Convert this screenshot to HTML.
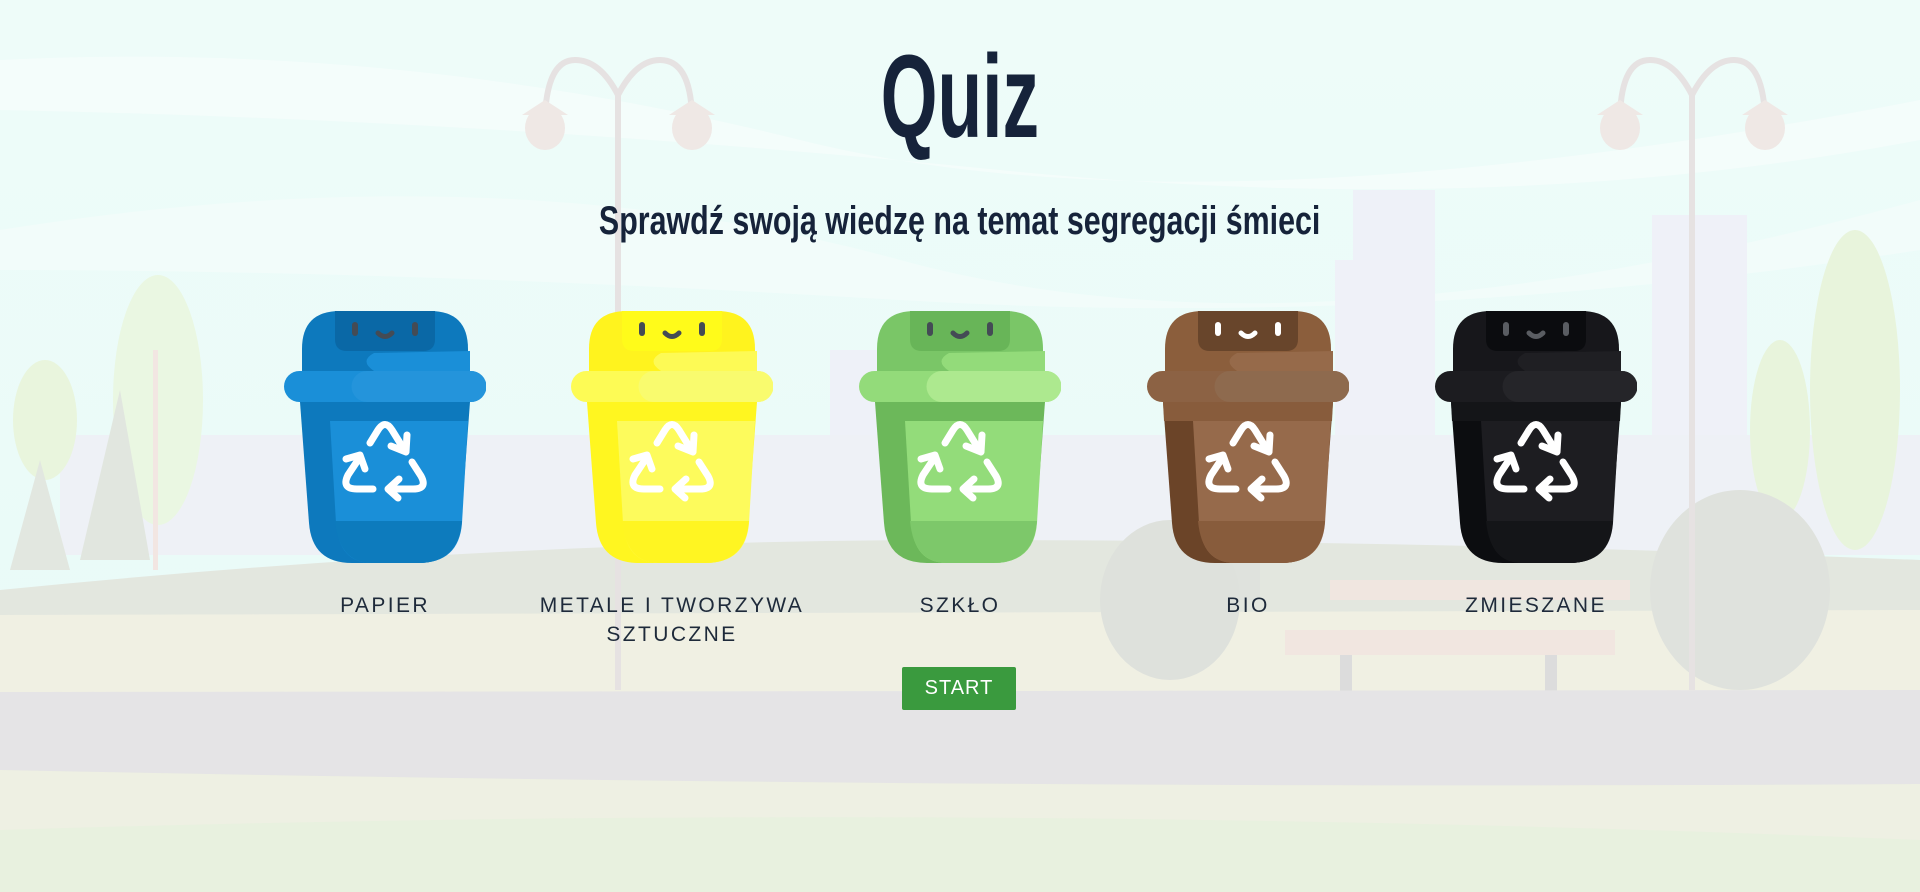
<!DOCTYPE html>
<html><head><meta charset="utf-8">
<style>
html,body{margin:0;padding:0;width:1920px;height:892px;overflow:hidden;}
body{position:relative;background:#eafbf8;font-family:"Liberation Sans",sans-serif;}
#bg{position:absolute;left:0;top:0;}
h1{position:absolute;left:0;width:1920px;top:22px;margin:0;text-align:center;font-size:118px;font-weight:bold;color:#16233a;line-height:150px;}
h1 span{display:inline-block;transform:scaleX(0.62);}
h2{position:absolute;left:0;width:1920px;top:196px;margin:0;text-align:center;font-size:40px;font-weight:bold;color:#16233a;line-height:50px;white-space:nowrap;}
h2 span{display:inline-block;transform:scaleX(0.76);}
.bin{position:absolute;top:311px;width:202px;height:252px;}
.lbl{position:absolute;top:591px;width:300px;text-align:center;font-size:21px;letter-spacing:2.4px;color:#1e2a3a;line-height:29px;}
.btn{position:absolute;left:902px;top:667px;width:114px;height:43px;background:#3a9a3e;color:#fff;font-size:20px;letter-spacing:1px;text-align:center;line-height:43px;border-radius:2px;}
</style></head><body>
<svg id="bg" width="1920" height="892" viewBox="0 0 1920 892">
<defs><linearGradient id="sky" x1="0" y1="0" x2="0" y2="1"><stop offset="0" stop-color="#eefcf9"/><stop offset="1" stop-color="#e8faf8"/></linearGradient></defs>
<rect width="1920" height="892" fill="url(#sky)"/>
<path d="M0 60 Q400 40 800 140 T1920 100 L1920 140 Q1500 220 1000 170 T0 110Z" fill="#f4fdfb"/>
<path d="M0 230 Q500 150 900 260 T1920 200 L1920 250 Q1400 330 900 300 T0 270Z" fill="#f2fcfa"/>
<rect x="1353" y="190" width="82" height="350" fill="#eef1f8"/>
<rect x="1335" y="260" width="100" height="280" fill="#eff1f8"/>
<rect x="1652" y="215" width="95" height="330" fill="#eff1f8"/>
<rect x="830" y="350" width="120" height="200" fill="#eef1f8"/>
<rect x="60" y="435" width="1860" height="120" fill="#eef1f6"/>
<ellipse cx="158" cy="400" rx="45" ry="125" fill="#eaf7e2"/>
<ellipse cx="45" cy="420" rx="32" ry="60" fill="#e9f5dd"/>
<ellipse cx="1855" cy="390" rx="45" ry="160" fill="#e8f4dc"/>
<ellipse cx="1780" cy="430" rx="30" ry="90" fill="#e8f4dc"/>
<path d="M80 560 L120 390 L150 560Z" fill="#e1e6df"/>
<path d="M10 570 L40 460 L70 570Z" fill="#e2e7e0"/>
<rect x="153" y="350" width="5" height="220" fill="#f2e6e2"/>
<path d="M0 590 Q500 540 960 540 T1920 560 L1920 892 L0 892Z" fill="#e3e7df"/>
<path d="M0 615 L1920 610 L1920 700 L0 700Z" fill="#f0f0e3"/>
<path d="M1180 520 Q1210 500 1260 520 L1260 600 L1160 600Z" fill="#dfe2dd"/>
<ellipse cx="1170" cy="600" rx="70" ry="80" fill="#dee1dc"/>
<ellipse cx="1740" cy="590" rx="90" ry="100" fill="#dfe2dd"/>
<rect x="1285" y="630" width="330" height="25" fill="#f1e6e0"/>
<rect x="1330" y="580" width="300" height="20" fill="#f0e6e0"/>
<rect x="1340" y="655" width="12" height="45" fill="#dcdcdc"/>
<rect x="1545" y="655" width="12" height="45" fill="#dcdcdc"/>
<path d="M0 692 L1920 690 L1920 784 Q960 790 0 770Z" fill="#e5e4e6"/>
<path d="M0 770 Q960 790 1920 784 L1920 892 L0 892Z" fill="#eef0e3"/>
<path d="M0 830 Q960 800 1920 840 L1920 892 L0 892Z" fill="#e8f1df"/>
<g fill="none" stroke="#e6e2e2" stroke-width="6">
<line x1="618" y1="90" x2="618" y2="690"/>
<path d="M618 95 Q600 60 575 60 Q548 60 545 115"/><path d="M618 95 Q636 60 660 60 Q690 60 692 115"/>
<line x1="1692" y1="90" x2="1692" y2="690"/>
<path d="M1692 95 Q1674 60 1650 60 Q1622 60 1620 115"/><path d="M1692 95 Q1710 60 1734 60 Q1762 60 1765 115"/>
</g>
<g fill="#efe8e5">
<path d="M522 115 L545 100 L568 115Z"/><ellipse cx="545" cy="128" rx="20" ry="22"/>
<path d="M669 115 L692 100 L715 115Z"/><ellipse cx="692" cy="128" rx="20" ry="22"/>
<path d="M1597 115 L1620 100 L1643 115Z"/><ellipse cx="1620" cy="128" rx="20" ry="22"/>
<path d="M1742 115 L1765 100 L1788 115Z"/><ellipse cx="1765" cy="128" rx="20" ry="22"/>
</g>
</svg>

<h1><span>Quiz</span></h1>
<h2><span>Sprawdź swoją wiedzę na temat segregacji śmieci</span></h2>

<svg width="0" height="0" style="position:absolute">
<defs>
<g id="rec" fill="none" stroke="#fff" stroke-width="7" stroke-linecap="round" stroke-linejoin="round">
<path d="M-15 -18 L-7 -31 Q0 -42 7 -31 L20 -10"/><path d="M6 -15 L21 -9 L22 -26"/>
<path d="M-12 28 L-28 28 Q-44 28 -37 14 L-25 -4"/><path d="M-39 -2 L-25 -6 L-20 8"/>
<path d="M27 1 L36 15 Q43 28 28 28 L5 28"/><path d="M14 18 L3 28 L13 37"/>
</g>
</defs>
</svg>

<svg class="bin" style="left:284px" viewBox="0 0 202 252">
<path d="M18 60 L18 38 Q18 0 56 0 L146 0 Q184 0 184 38 L184 60Z" fill="#0d79bd"/>
<path d="M90 42 Q75 50 90 60 L186 60 L186 40Z" fill="#1a8fd8"/>
<path d="M51 0 L151 0 L151 28 Q151 40 139 40 L63 40 Q51 40 51 28Z" fill="#0a68a6"/>
<rect x="68" y="11" width="6" height="14" rx="3" fill="#444b55"/><rect x="128" y="11" width="6" height="14" rx="3" fill="#444b55"/>
<path d="M94 22 Q101 29 108 22" stroke="#444b55" stroke-width="5" fill="none" stroke-linecap="round"/>
<path d="M16 91 L186 91 L177 212 Q174 252 134 252 L68 252 Q28 252 25 212Z" fill="#0d79bd"/>
<path d="M46 110 L184 110 L178 212 Q175 252 134 252 L88 252 Q55 252 52 212Z" fill="#1a8fd8"/>
<path d="M51 210 L178 210 Q175 252 134 252 L88 252 Q55 252 51 210Z" fill="#0d7bbd"/>
<rect x="0" y="60" width="202" height="31" rx="15.5" fill="#1a8fd8"/>
<path d="M83 60 L187 60 A15.5 15.5 0 0 1 187 91 L83 91 A15.5 15.5 0 0 1 83 60Z" fill="#2494db"/>
<use href="#rec" x="101" y="150"/>
</svg>
<svg class="bin" style="left:571px" viewBox="0 0 202 252">
<path d="M18 60 L18 38 Q18 0 56 0 L146 0 Q184 0 184 38 L184 60Z" fill="#fff31e"/>
<path d="M90 42 Q75 50 90 60 L186 60 L186 40Z" fill="#fdfa55"/>
<path d="M51 0 L151 0 L151 28 Q151 40 139 40 L63 40 Q51 40 51 28Z" fill="#fffb1a"/>
<rect x="68" y="11" width="6" height="14" rx="3" fill="#444b55"/><rect x="128" y="11" width="6" height="14" rx="3" fill="#444b55"/>
<path d="M94 22 Q101 29 108 22" stroke="#444b55" stroke-width="5" fill="none" stroke-linecap="round"/>
<path d="M16 91 L186 91 L177 212 Q174 252 134 252 L68 252 Q28 252 25 212Z" fill="#fff620"/>
<path d="M46 110 L184 110 L178 212 Q175 252 134 252 L88 252 Q55 252 52 212Z" fill="#fdfb5c"/>
<path d="M51 210 L178 210 Q175 252 134 252 L88 252 Q55 252 51 210Z" fill="#fff522"/>
<rect x="0" y="60" width="202" height="31" rx="15.5" fill="#fdfb55"/>
<path d="M83 60 L187 60 A15.5 15.5 0 0 1 187 91 L83 91 A15.5 15.5 0 0 1 83 60Z" fill="#f9fb6e"/>
<use href="#rec" x="101" y="150"/>
</svg>
<svg class="bin" style="left:859px" viewBox="0 0 202 252">
<path d="M18 60 L18 38 Q18 0 56 0 L146 0 Q184 0 184 38 L184 60Z" fill="#7ac667"/>
<path d="M90 42 Q75 50 90 60 L186 60 L186 40Z" fill="#93db7a"/>
<path d="M51 0 L151 0 L151 28 Q151 40 139 40 L63 40 Q51 40 51 28Z" fill="#68b558"/>
<rect x="68" y="11" width="6" height="14" rx="3" fill="#444b55"/><rect x="128" y="11" width="6" height="14" rx="3" fill="#444b55"/>
<path d="M94 22 Q101 29 108 22" stroke="#444b55" stroke-width="5" fill="none" stroke-linecap="round"/>
<path d="M16 91 L186 91 L177 212 Q174 252 134 252 L68 252 Q28 252 25 212Z" fill="#6cb85a"/>
<path d="M46 110 L184 110 L178 212 Q175 252 134 252 L88 252 Q55 252 52 212Z" fill="#93dc7a"/>
<path d="M51 210 L178 210 Q175 252 134 252 L88 252 Q55 252 51 210Z" fill="#7dc86a"/>
<rect x="0" y="60" width="202" height="31" rx="15.5" fill="#93db7a"/>
<path d="M83 60 L187 60 A15.5 15.5 0 0 1 187 91 L83 91 A15.5 15.5 0 0 1 83 60Z" fill="#ade98f"/>
<use href="#rec" x="101" y="150"/>
</svg>
<svg class="bin" style="left:1147px" viewBox="0 0 202 252">
<path d="M18 60 L18 38 Q18 0 56 0 L146 0 Q184 0 184 38 L184 60Z" fill="#8b5e3c"/>
<path d="M90 42 Q75 50 90 60 L186 60 L186 40Z" fill="#966a4a"/>
<path d="M51 0 L151 0 L151 28 Q151 40 139 40 L63 40 Q51 40 51 28Z" fill="#68452b"/>
<rect x="68" y="11" width="6" height="14" rx="3" fill="#fff"/><rect x="128" y="11" width="6" height="14" rx="3" fill="#fff"/>
<path d="M94 22 Q101 29 108 22" stroke="#fff" stroke-width="5" fill="none" stroke-linecap="round"/>
<path d="M16 91 L186 91 L177 212 Q174 252 134 252 L68 252 Q28 252 25 212Z" fill="#6b4428"/>
<path d="M46 110 L184 110 L178 212 Q175 252 134 252 L88 252 Q55 252 52 212Z" fill="#966a4b"/>
<path d="M51 210 L178 210 Q175 252 134 252 L88 252 Q55 252 51 210Z" fill="#885c3c"/>
<rect x="0" y="60" width="202" height="31" rx="15.5" fill="#8c6244"/>
<path d="M83 60 L187 60 A15.5 15.5 0 0 1 187 91 L83 91 A15.5 15.5 0 0 1 83 60Z" fill="#8e6a4e"/>
<path d="M16 91 L186 91 L185 110 L17 110Z" fill="#885c3c"/>
<use href="#rec" x="101" y="150"/>
</svg>
<svg class="bin" style="left:1435px" viewBox="0 0 202 252">
<path d="M18 60 L18 38 Q18 0 56 0 L146 0 Q184 0 184 38 L184 60Z" fill="#17171b"/>
<path d="M90 42 Q75 50 90 60 L186 60 L186 40Z" fill="#1f1f23"/>
<path d="M51 0 L151 0 L151 28 Q151 40 139 40 L63 40 Q51 40 51 28Z" fill="#0b0c0f"/>
<rect x="68" y="11" width="6" height="14" rx="3" fill="#5a5d62"/><rect x="128" y="11" width="6" height="14" rx="3" fill="#5a5d62"/>
<path d="M94 22 Q101 29 108 22" stroke="#5a5d62" stroke-width="5" fill="none" stroke-linecap="round"/>
<path d="M16 91 L186 91 L177 212 Q174 252 134 252 L68 252 Q28 252 25 212Z" fill="#0c0d10"/>
<path d="M46 110 L184 110 L178 212 Q175 252 134 252 L88 252 Q55 252 52 212Z" fill="#1d1d21"/>
<path d="M51 210 L178 210 Q175 252 134 252 L88 252 Q55 252 51 210Z" fill="#141518"/>
<path d="M16 91 L186 91 L185 110 L17 110Z" fill="#141518"/>
<rect x="0" y="60" width="202" height="31" rx="15.5" fill="#1c1c20"/>
<path d="M83 60 L187 60 A15.5 15.5 0 0 1 187 91 L83 91 A15.5 15.5 0 0 1 83 60Z" fill="#252529"/>
<use href="#rec" x="101" y="150"/>
</svg>

<div class="lbl" style="left:235px">PAPIER</div>
<div class="lbl" style="left:522px">METALE I TWORZYWA<br>SZTUCZNE</div>
<div class="lbl" style="left:810px">SZKŁO</div>
<div class="lbl" style="left:1098px">BIO</div>
<div class="lbl" style="left:1386px">ZMIESZANE</div>
<div class="btn">START</div>
</body></html>
